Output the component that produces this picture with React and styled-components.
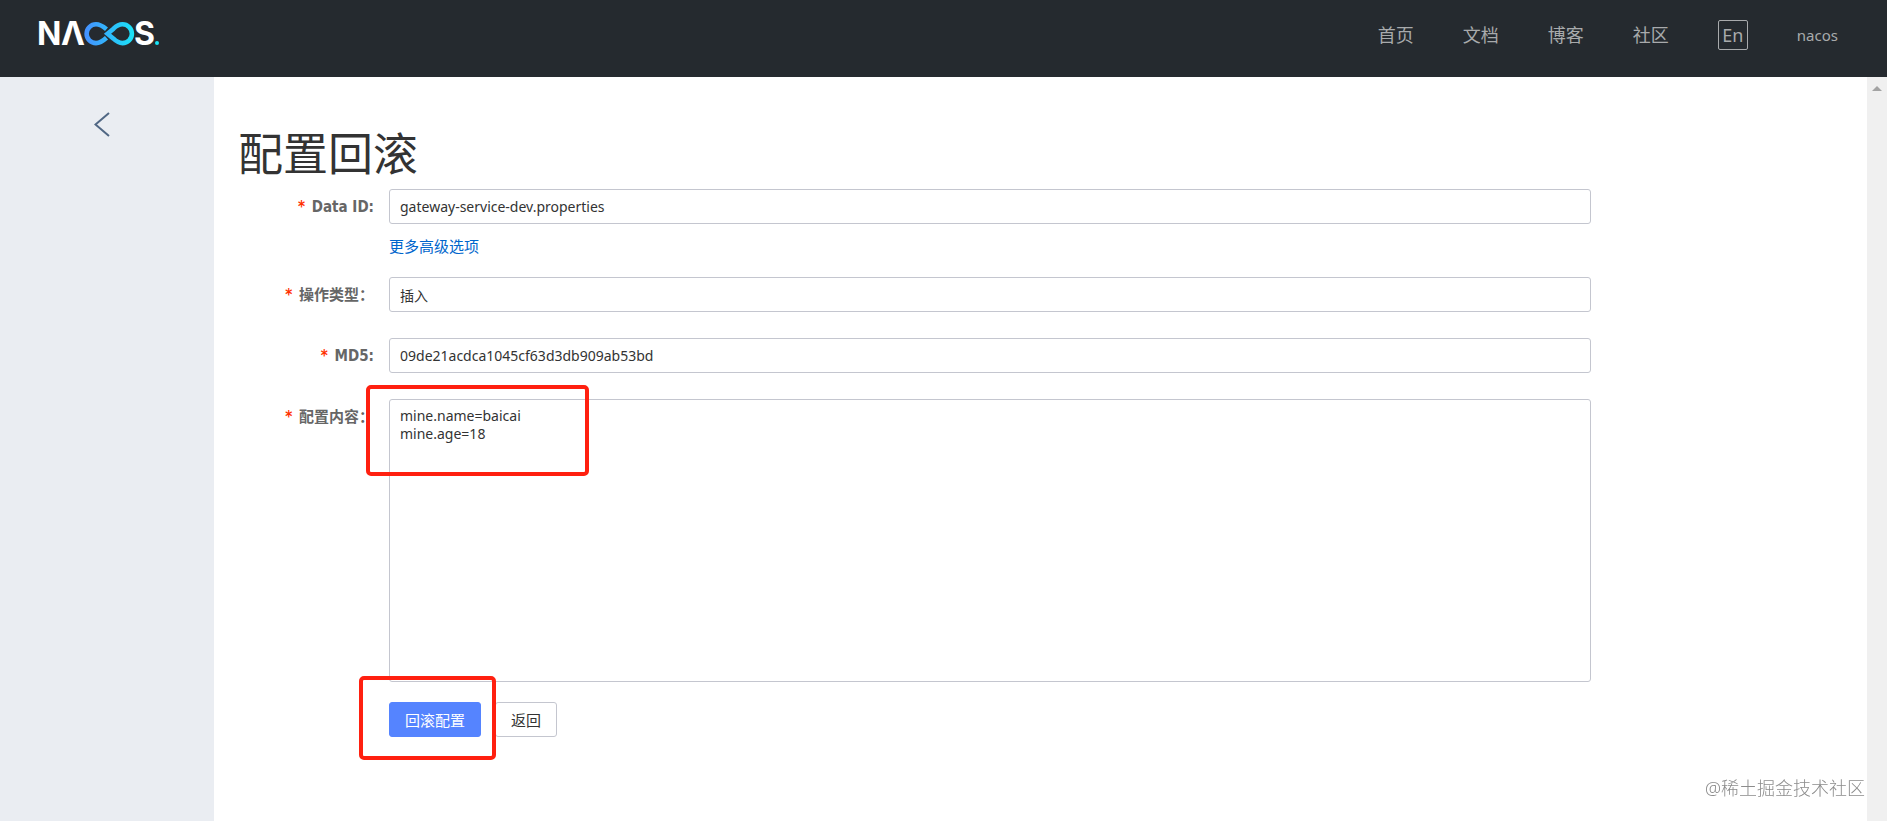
import styled, { createGlobalStyle } from 'styled-components';

const links = ['首页', '文档', '博客', '社区'];

const content = `mine.name=baicai
mine.age=18`;

const Logo = () => (
  <svg width="130" height="44" viewBox="-4 -8 130 44" role="img" aria-label="Nacos">
    <defs>
      <linearGradient id="loop" gradientUnits="userSpaceOnUse" x1="46" y1="0" x2="96" y2="0">
        <stop offset="0" stopColor="#4590ff" />
        <stop offset="1" stopColor="#19e5f7" />
      </linearGradient>
    </defs>
    <LogoText x="-2" y="25">N</LogoText>
    <LogoText x="22" y="25">Λ</LogoText>
    <g fill="none" stroke="url(#loop)" strokeWidth="4.6">
      <path d="M67.500 9.300C63 5.500 60.500 4.300 57 4.300a9.400 9.400 0 0 0 0 18.800c3.500 0 6-1.200 10.500-5.300" />
      <path d="M68.500 13.700l6-5C77.500 5.800 80 4.300 83.500 4.300a9.400 9.400 0 0 1 0 18.800c-3.500 0-6-1.500-9-4.400z" />
    </g>
    <LogoText x="95" y="25">S</LogoText>
    <circle cx="118" cy="23" r="2" fill="#19e5f7" />
  </svg>
);

const Field = ({ id, label, compact, children }) => (
  <Row $compact={compact}>
    <Label htmlFor={id}>
      <Star>*</Star> {label}
    </Label>
    <Control>{children}</Control>
  </Row>
);

const App = () => (
  <Page>
    <GlobalStyle />
    <Header>
      <LogoLink href="#">
        <Logo />
      </LogoLink>
      <Nav>
        {links.map(link => (
          <NavLink key={link} href="#">
            {link}
          </NavLink>
        ))}
        <LangButton type="button">En</LangButton>
        <UserLink href="#">nacos</UserLink>
      </Nav>
    </Header>

    <Body>
      <Sidebar>
        <BackButton type="button" aria-label="返回">
          <svg width="16" height="25" viewBox="0 0 16 25" fill="none" stroke="#506784" strokeWidth="2">
            <path d="M15 1L1.500 12.500L15 24" />
          </svg>
        </BackButton>
      </Sidebar>

      <Main>
        <Title>配置回滚</Title>
        <Form onSubmit={e => e.preventDefault()}>
          <Field id="dataId" label="Data ID:" compact>
            <Input id="dataId" defaultValue="gateway-service-dev.properties" readOnly />
            <MoreLink href="#">更多高级选项</MoreLink>
          </Field>
          <Field id="opType" label="操作类型：">
            <Input id="opType" defaultValue="插入" readOnly />
          </Field>
          <Field id="md5" label="MD5:">
            <Input id="md5" defaultValue="09de21acdca1045cf63d3db909ab53bd" readOnly />
          </Field>
          <Field id="content" label="配置内容：">
            <TextArea id="content" defaultValue={content} readOnly />
            <Highlight $top={-14} $left={-23} $width={223} $height={91} />
          </Field>
          <Actions>
            <Button type="submit" $primary>
              回滚配置
            </Button>
            <Button type="button">返回</Button>
            <Highlight $top={-26} $left={-30} $width={137} $height={84} />
          </Actions>
        </Form>
      </Main>

      <ScrollTrack>
        <ScrollArrow />
      </ScrollTrack>
    </Body>
    <Watermark>@稀土掘金技术社区</Watermark>
  </Page>
);

export default App;

const GlobalStyle = createGlobalStyle`
  * {
    box-sizing: border-box;
  }
  body {
    margin: 0;
    color: #333;
    font-family: 'Noto Sans', 'Noto Sans CJK SC', sans-serif;
    font-size: 15px;
  }
  a {
    text-decoration: none;
  }
  button, input, textarea {
    font-family: inherit;
    font-size: inherit;
    color: inherit;
  }
`;

const Page = styled.div`
  display: flex;
  flex-direction: column;
  min-height: 100vh;
`;

const Header = styled.header`
  display: flex;
  align-items: flex-start;
  justify-content: space-between;
  height: 77px;
  padding: 12px 49px 0 35px;
  background: #252a2f;
`;

const LogoLink = styled.a`
  display: flex;
`;

const LogoText = styled.text`
  fill: #fff;
  font-family: Inter, sans-serif;
  font-size: 32px;
  font-weight: 700;
`;

const Nav = styled.nav`
  display: flex;
  align-items: center;
  gap: 49px;
  padding-top: 8px;
`;

const NavLink = styled.a`
  color: #a8aaac;
  font-size: 18px;
  line-height: 30px;
`;

const LangButton = styled.button`
  width: 30px;
  height: 30px;
  padding: 0;
  border: 1px solid #a8aaac;
  border-radius: 2px;
  background: none;
  color: #a8aaac;
  font-size: 18px;
  line-height: 26px;
`;

const UserLink = styled(NavLink)`
  font-size: 15px;
`;

const Body = styled.div`
  display: flex;
  flex: 1;
`;

const Sidebar = styled.aside`
  flex: 0 0 214px;
  padding-top: 35px;
  background: #eaedf2;
`;

const BackButton = styled.button`
  display: block;
  margin-left: 94px;
  padding: 0;
  border: 0;
  background: none;
`;

const Main = styled.main`
  flex: 1;
  padding: 47px 24px 0;
`;

const Title = styled.h1`
  margin: 0 0 5px;
  font-size: 45px;
  font-weight: 400;
  line-height: 60px;
`;

const Form = styled.form`
  padding-right: 252px;
`;

const Row = styled.div`
  display: grid;
  grid-template-columns: 136px 1fr;
  column-gap: 15px;
  margin-bottom: ${({ $compact }) => ($compact ? 21 : 24)}px;
`;

const Label = styled.label`
  color: #666;
  font-family: 'DejaVu Sans Condensed', 'Noto Sans CJK SC', sans-serif;
  font-weight: 700;
  line-height: 37px;
  text-align: right;
`;

const Star = styled.span`
  margin-right: 2px;
  color: #ff3000;
`;

const Control = styled.div`
  position: relative;
`;

const Input = styled.input`
  display: block;
  width: 100%;
  height: 35px;
  padding: 0 10px;
  border: 1px solid #c4c6cf;
  border-radius: 3px;
  font-size: 14px;
`;

const MoreLink = styled.a`
  display: block;
  width: fit-content;
  margin-top: 12px;
  color: #0066cc;
  line-height: 20px;
`;

const TextArea = styled.textarea`
  display: block;
  width: 100%;
  height: 283px;
  padding: 7px 10px;
  border: 1px solid #c4c6cf;
  border-radius: 3px;
  font-size: 14px;
  line-height: 18px;
  resize: none;
`;

const Actions = styled.div`
  position: relative;
  display: flex;
  gap: 14px;
  margin: -4px 0 0 151px;
`;

const Button = styled.button`
  height: 35px;
  padding: 0 15px;
  border: 1px solid ${({ $primary }) => ($primary ? '#5584ff' : '#c4c6cf')};
  border-radius: 3px;
  background: ${({ $primary }) => ($primary ? '#5584ff' : '#fff')};
  color: ${({ $primary }) => ($primary ? '#fff' : '#333')};
`;

const Highlight = styled.div`
  position: absolute;
  top: ${({ $top }) => $top}px;
  left: ${({ $left }) => $left}px;
  width: ${({ $width }) => $width}px;
  height: ${({ $height }) => $height}px;
  border: 4px solid #ff2010;
  border-radius: 5px;
  pointer-events: none;
`;

const ScrollTrack = styled.div`
  flex: 0 0 20px;
  padding-top: 9px;
  background: #f0f0f0;
`;

const ScrollArrow = styled.div`
  width: 0;
  margin: 0 auto;
  border: 5px solid transparent;
  border-top: 0;
  border-bottom-color: #a3a3a3;
`;

const Watermark = styled.div`
  position: fixed;
  right: 22px;
  bottom: 19px;
  color: #8c8c8c;
  font-size: 18px;
  font-weight: 300;
  line-height: 28px;
`;
